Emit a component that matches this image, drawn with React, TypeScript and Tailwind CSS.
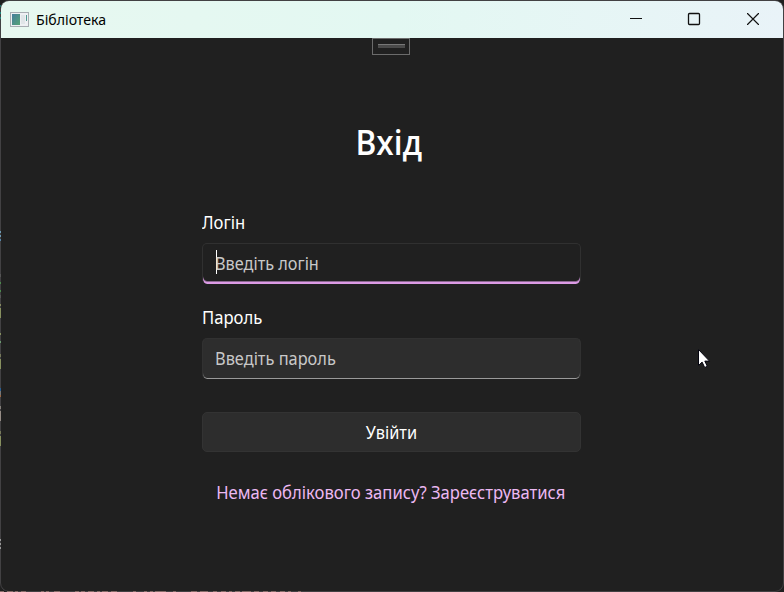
import React from 'react';

// Fragments of the editor behind the window, visible through its left edge.
const leftMarks: [number, number, string][] = [
  [5, 2, '#1a6c65'], [12, 2, '#1d8178'], [17, 2, '#1d8178'],
  [231, 2, '#6d9bb5'], [235, 2, '#6d9bb5'], [239, 2, '#5687ad'],
  [274, 3, '#555555'], [282, 2, '#4b8a4b'], [290, 2, '#4b8a4b'], [295, 3, '#555555'],
  [304, 2, '#878b60'], [308, 10, '#87905f'], [333, 2, '#87905f'], [341, 2, '#6b9b70'],
  [354, 3, '#76795a'], [359, 10, '#87905f'], [388, 3, '#285d91'], [391, 4, '#777777'],
  [395, 2, '#9b6745'], [406, 3, '#85807a'], [411, 10, '#968d86'],
  [431, 3, '#76795a'], [436, 10, '#87905f'],
  [539, 2, '#999999'], [543, 2, '#999999'], [547, 2, '#999999'],
];

const bottomMarks: [number, number][] = [
  [0, 4], [7, 6], [15, 3], [21, 5], [41, 3], [46, 3], [54, 6], [75, 4], [81, 4],
  [88, 6], [97, 3], [102, 6], [111, 6], [133, 3], [144, 3], [150, 3], [155, 11],
  [173, 3], [191, 6], [200, 8], [213, 4], [221, 5], [229, 3], [235, 5], [242, 9],
  [254, 5], [263, 5], [271, 5], [280, 5], [288, 3], [298, 3],
];

function TitleBar() {
  return (
    <header className="flex h-[37px] shrink-0 items-center bg-linear-to-r from-[#e7f8f0] via-[#e3f8f2] to-[#e9f3f8] text-black">
      <svg className="ml-[9px] shrink-0" width="19" height="16" viewBox="0 0 19 16">
        <defs>
          <linearGradient id="pane" x1="0" y1="0" x2="1" y2="1">
            <stop offset="0" stopColor="#467d9c" />
            <stop offset="1" stopColor="#55a477" />
          </linearGradient>
        </defs>
        <rect x="0.5" y="0.5" width="18" height="14" fill="#eef0f3" stroke="#a7adb2" />
        <rect x="2" y="2" width="8" height="11" fill="url(#pane)" />
        <rect x="11" y="3" width="4" height="9" fill="#e0e5e8" />
        <rect x="16" y="3" width="1" height="6" fill="#4f9a91" />
      </svg>
      <span className="-mt-0.5 ml-[7px] inline-block origin-left scale-x-[0.94] text-[15px] leading-5 whitespace-nowrap">Бібліотека</span>
      <div className="ml-auto flex">
        <svg width="58" height="37" viewBox="0 0 58 37">
          <path d="M22 17.5h12" stroke="#111" />
        </svg>
        <svg width="58" height="37" viewBox="0 0 58 37">
          <rect x="22.5" y="12.5" width="11" height="11" rx="1" fill="none" stroke="#111" strokeWidth="1.3" />
        </svg>
        <svg width="59" height="37" viewBox="0 0 59 37">
          <path d="m23.5 12.5 11 11m0-11-11 11" stroke="#111" strokeWidth="1.15" strokeLinecap="round" />
        </svg>
      </div>
    </header>
  );
}

export default function App() {
  return (
    <div className="relative h-[592px] w-[784px] overflow-hidden bg-[#202020] font-['Noto_Sans','Open_Sans',sans-serif]">
      <div className="flex h-full flex-col overflow-hidden rounded-[9px] border border-[#424143] bg-[#202020] text-white">
        <TitleBar />
        <main className="flex flex-1 flex-col items-center">
          <div className="mr-0.5 flex h-[17px] w-[38px] shrink-0 justify-center border border-[#6b6b6b] pt-[5px]">
            <div className="h-1 w-[27px] border-t border-[#777] bg-[#4a4a4a]" />
          </div>
          <h1 className="mt-[64px] mr-[7px] h-[46px] scale-x-[0.93] font-['Open_Sans','Noto_Sans',sans-serif] text-[34px] leading-[46px] font-semibold whitespace-nowrap">Вхід</h1>
          <form className="mt-[46px] mr-px flex w-[379px] flex-col">
            <label className="h-6 text-[17.5px] leading-[22px]"><span className="inline-block origin-left scale-x-[0.95]">Логін</span></label>
            <div className="mt-[8px] flex h-[41px] items-center overflow-hidden rounded-[5px] border border-b-0 border-[#303030] bg-[#202020] pl-[13px] shadow-[inset_0_-2px_0_#dc9be5,inset_0_-3px_0_#8b6790]">
              <i className="-mt-1 h-6 w-px bg-white" />
              <span className="-mt-0.5 -ml-[2px] inline-block origin-left scale-x-[0.93] text-[17.5px] leading-6 text-[#c8c8c8]">Введіть логін</span>
            </div>
            <label className="mt-[22px] h-6 text-[17.5px] leading-[22px]"><span className="inline-block origin-left scale-x-[0.95]">Пароль</span></label>
            <div className="mt-[8px] flex h-[41px] items-center overflow-hidden rounded-[5px] border border-b-0 border-[#313131] bg-[#2d2d2d] pl-[13px] shadow-[inset_0_-1px_0_#9a9a9a]">
              <span className="-mt-0.5 -ml-px inline-block origin-left scale-x-[0.935] text-[17.5px] leading-6 text-[#c8c8c8]">Введіть пароль</span>
            </div>
            <button type="button" className="mt-[33px] flex h-10 items-center justify-center rounded-[5px] border border-[#333] bg-[#2d2d2d] text-[17.5px]">
              <span className="inline-block scale-x-[0.935]">Увійти</span>
            </button>
            <a className="mt-[28px] pr-px text-center text-[17.5px] leading-6 whitespace-nowrap text-[#ecb8f2]">
              <span className="inline-block scale-x-[0.95]">Немає облікового запису? Зареєструватися</span>
            </a>
          </form>
        </main>
      </div>
      <svg className="pointer-events-none absolute inset-0" width="784" height="592" viewBox="0 0 784 592">
        {leftMarks.map(([y, h, c]) => <rect key={y} x="0" y={y} width="1" height={h} fill={c} />)}
        {bottomMarks.map(([x, w]) => <rect key={x} x={x} y="591" width={w} height="1" fill="#866d69" />)}
        <path d="M698.5 349.5v16l3.6-3.4 2.6 5.4 2.6-1.2-2.5-5.2h4.7z" fill="white" stroke="#050510" />
      </svg>
    </div>
  );
}
